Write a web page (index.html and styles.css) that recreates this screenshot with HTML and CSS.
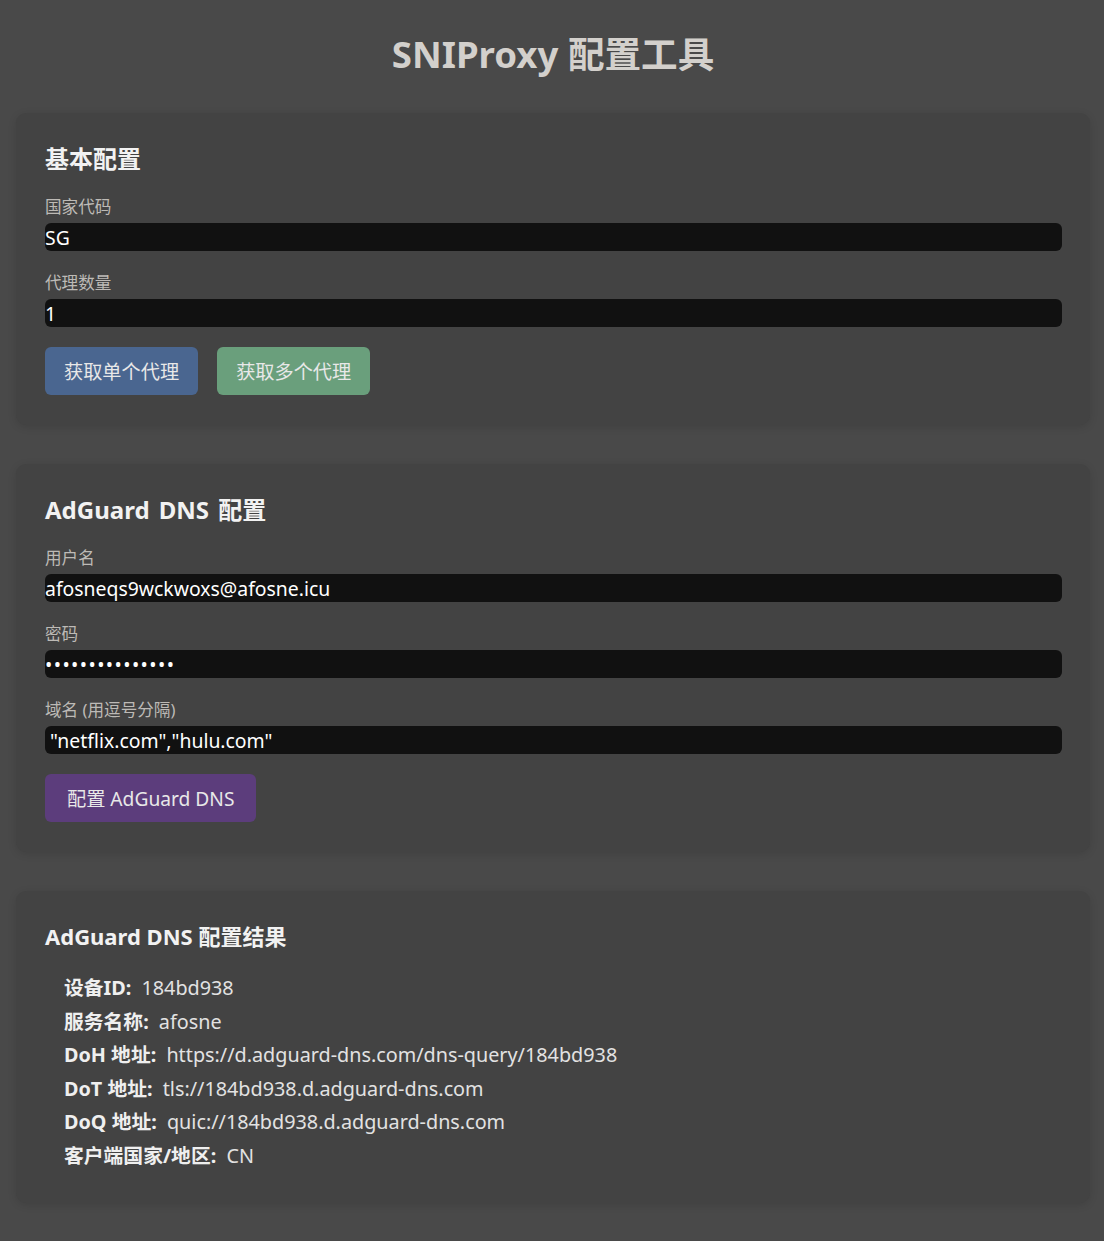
FILE: index.html
```html
<!DOCTYPE html>
<html lang="zh-CN">
<head>
<meta charset="utf-8">
<title>SNIProxy 配置工具</title>
<link rel="stylesheet" href="styles.css">
</head>
<body>
<div class="page">
  <h1 class="title">SNIProxy 配置工具</h1>

  <section class="card">
    <h2 class="card-title">基本配置</h2>
    <label class="field-label" for="country">国家代码</label>
    <input class="field-input" id="country" type="text" value="SG">
    <label class="field-label" for="count">代理数量</label>
    <input class="field-input" id="count" type="text" value="1">
    <div class="actions">
      <button class="btn btn-blue" type="button">获取单个代理</button>
      <button class="btn btn-green" type="button">获取多个代理</button>
    </div>
  </section>

  <section class="card">
    <h2 class="card-title">AdGuard DNS 配置</h2>
    <label class="field-label" for="user">用户名</label>
    <input class="field-input" id="user" type="text" value="afosneqs9wckwoxs@afosne.icu">
    <label class="field-label" for="pass">密码</label>
    <input class="field-input field-secret" id="pass" type="password" value="abcdefghijklmno">
    <label class="field-label" for="domains">域名 (用逗号分隔)</label>
    <input class="field-input" id="domains" type="text" value=" &quot;netflix.com&quot;,&quot;hulu.com&quot;">
    <div class="actions">
      <button class="btn btn-purple" type="button">配置 AdGuard DNS</button>
    </div>
  </section>

  <section class="card">
    <h3 class="result-title">AdGuard DNS 配置结果</h3>
    <ul class="result-list">
      <li><strong>设备ID:</strong> 184bd938</li>
      <li><strong>服务名称:</strong> afosne</li>
      <li><strong>DoH 地址:</strong> https://d.adguard-dns.com/dns-query/184bd938</li>
      <li><strong>DoT 地址:</strong> tls://184bd938.d.adguard-dns.com</li>
      <li><strong>DoQ 地址:</strong> quic://184bd938.d.adguard-dns.com</li>
      <li><strong>客户端国家/地区:</strong> CN</li>
    </ul>
  </section>
</div>
</body>
</html>
```
FILE: styles.css
```css
* {
  box-sizing: border-box;
}

html, body {
  margin: 0;
  padding: 0;
  background: #494949;
}

body {
  font-family: "Noto Sans", "Noto Sans CJK SC", sans-serif;
  color: #e6e6e6;
}

.page {
  padding: 0 14px 38px 16px;
}

.title {
  margin: 0;
  padding: 30px 0 35px;
  font-size: 36.6px;
  line-height: 48px;
  font-weight: 700;
  text-align: center;
  color: #d3d0cc;
}

.card {
  background: #434343;
  border-radius: 10px;
  padding: 30px 28px 30px 29px;
  margin-bottom: 39px;
  box-shadow: 0 2px 8px rgba(0, 0, 0, 0.12);
}

.card:last-child {
  margin-bottom: 0;
}

.card-title {
  margin: 0 0 20px;
  font-size: 24px;
  line-height: 32px;
  font-weight: 700;
  color: #f2f2f2;
  word-spacing: 3px;
}

.field-label {
  display: block;
  font-size: 16.6px;
  line-height: 24px;
  margin-bottom: 4px;
  color: #bdbab6;
}

.field-input {
  display: block;
  width: 100%;
  height: 28px;
  margin: 0 0 20px;
  padding: 0;
  border: none;
  border-radius: 6px;
  background: #111111;
  color: #ffffff;
  font-family: "Noto Sans", "Noto Sans CJK SC", sans-serif;
  font-size: 19.4px;
  outline: none;
}

.field-secret {
  letter-spacing: 1.4px;
}

.actions {
  display: flex;
  gap: 19px;
}

.btn {
  height: 48px;
  padding: 0 19px;
  border: none;
  border-radius: 6px;
  font-family: "Noto Sans", "Noto Sans CJK SC", sans-serif;
  font-size: 19.2px;
  color: #e8e8e8;
  cursor: pointer;
}

.btn-blue {
  background: #4a6690;
}

.btn-green {
  background: #6a9f7c;
}

.btn-purple {
  background: #5c3d7c;
  padding: 0 22px;
}

.result-title {
  margin: 0 0 19px;
  font-size: 22px;
  line-height: 31px;
  font-weight: 700;
  color: #f2f2f2;
}

.result-list {
  list-style: none;
  margin: 0;
  padding: 0 0 0 19px;
}

.result-list li {
  font-size: 19.8px;
  line-height: 33.6px;
  color: #e2e2e2;
}

.result-list strong {
  color: #efefef;
  margin-right: 5px;
}
```
